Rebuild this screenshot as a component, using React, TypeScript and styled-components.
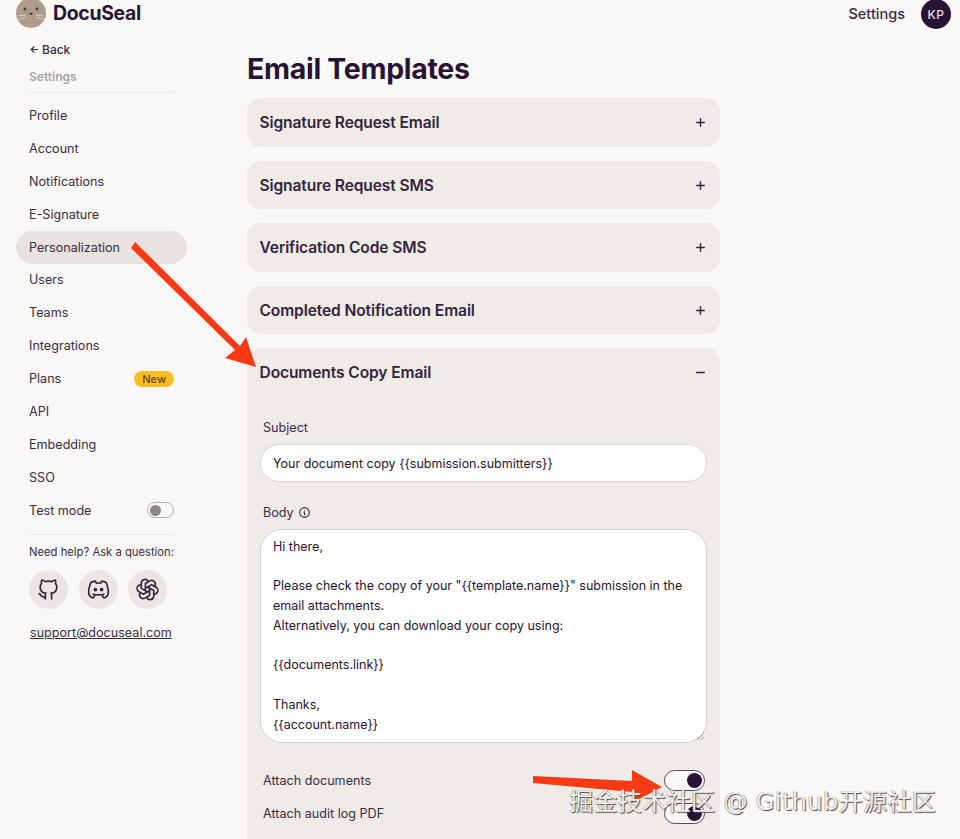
import React from 'react';
import styled, { createGlobalStyle } from 'styled-components';
import { TbArrowLeft, TbBrandDiscord, TbBrandGithub, TbBrandOpenai, TbInfoCircle, TbMinus, TbPlus } from 'react-icons/tb';

const GlobalStyle = createGlobalStyle`
  html, body {
    margin: 0;
    background: #faf8f6;
    color: #291334;
    font-family: Inter, "Liberation Sans", sans-serif;
  }
  * { box-sizing: border-box; }
`;

const Page = styled.div`
  position: relative;
  width: 960px;
  height: 839px;
  overflow: hidden;
`;

const Header = styled.header`
  display: flex;
  align-items: center;
  justify-content: space-between;
  height: 28px;
  padding: 0 9px 0 16px;
`;

const Brand = styled.div`
  display: flex;
  align-items: center;
  gap: 7px;
  font-size: 19.4px;
  font-weight: 700;
  letter-spacing: -0.3px;
`;

const BrandName = styled.span`
  margin-bottom: 2px;
`;

const UserArea = styled.div`
  display: flex;
  align-items: center;
  gap: 16px;
  font-size: 14.5px;
  font-weight: 500;
  color: #3b2c46;
`;

const UserLabel = styled.span`
  margin-bottom: 1px;
`;

const Avatar = styled.div`
  display: flex;
  align-items: center;
  justify-content: center;
  width: 30px;
  height: 30px;
  border-radius: 50%;
  background: #291334;
  color: #e6dfe6;
  font-size: 12px;
  font-weight: 500;
  letter-spacing: 0.5px;
`;

const Layout = styled.div`
  display: grid;
  grid-template-columns: 247px 473px;
`;

const Sidebar = styled.aside`
  padding: 13px 60px 0 16px;
  font-size: 12.6px;
  color: #3b2c46;
`;

const BackLink = styled.div`
  display: flex;
  align-items: center;
  gap: 2px;
  height: 16px;
  padding-left: 13px;
  font-size: 12px;
  font-weight: 500;
`;

const SectionTitle = styled.div`
  margin-top: 12px;
  padding-left: 13px;
  font-size: 12px;
  font-weight: 600;
  color: #a9a5aa;
`;

const Divider = styled.hr<{ $gap: string }>`
  height: 1px;
  margin: ${({ $gap }) => $gap};
  border: 0;
  background: #efebe8;
`;

const NavList = styled.ul`
  margin: 0;
  padding: 0;
  list-style: none;
`;

const NavItem = styled.li<{ $active?: boolean }>`
  display: flex;
  align-items: center;
  justify-content: space-between;
  height: 32.92px;
  padding: 0 13px;
  border-radius: 17px;
  background: ${({ $active }) => ($active ? '#e7e3df' : 'transparent')};
`;

const Badge = styled.span`
  padding: 1px 8px;
  border-radius: 9px;
  background: #fbbd23;
  color: #5e4a1c;
  font-size: 11px;
  font-weight: 500;
  line-height: 14px;
`;

const Toggle = styled.span<{ $on?: boolean; $small?: boolean }>`
  display: flex;
  align-items: center;
  justify-content: ${({ $on }) => ($on ? 'flex-end' : 'flex-start')};
  width: ${({ $small }) => ($small ? '27px' : '41px')};
  height: ${({ $small }) => ($small ? '16px' : '21px')};
  padding: 2px;
  border: 1px solid ${({ $on }) => ($on ? '#55485f' : '#b5b1b3')};
  border-radius: 11px;
  background: #faf8f6;
  &::after {
    content: '';
    width: ${({ $small }) => ($small ? '11px' : '15px')};
    height: ${({ $small }) => ($small ? '11px' : '15px')};
    border-radius: 50%;
    background: ${({ $on }) => ($on ? '#291334' : '#8b878b')};
  }
`;

const HelpText = styled.div`
  padding-left: 13px;
  font-size: 11.25px;
`;

const SocialRow = styled.div`
  display: flex;
  gap: 10.5px;
  margin-top: 11px;
  padding-left: 13px;
`;

const SocialButton = styled.span`
  display: flex;
  align-items: center;
  justify-content: center;
  width: 39px;
  height: 39px;
  border-radius: 50%;
  background: #e9e6e3;
  color: #35263f;
`;

const SupportLink = styled.div`
  margin-top: 16px;
  padding-left: 14px;
  text-decoration: underline;
`;

const Content = styled.main``;

const Title = styled.h1`
  margin: 0;
  padding-top: 21px;
  height: 70px;
  font-size: 28.5px;
  line-height: 40px;
  font-weight: 700;
  letter-spacing: -0.3px;
`;

const Card = styled.section`
  margin-bottom: 14px;
  border-radius: 14px;
  background: #efebe7;
`;

const CardHeader = styled.div`
  display: flex;
  align-items: center;
  justify-content: space-between;
  height: 48.5px;
  padding: 1px 13px 0 12.5px;
  font-size: 15.55px;
  font-weight: 600;
  letter-spacing: -0.1px;
  color: #33233e;
`;

const CardBody = styled.div`
  padding: 22px 13px 40px;
`;

const FieldLabel = styled.div`
  display: flex;
  align-items: center;
  gap: 4px;
  height: 17px;
  margin-bottom: 8px;
  padding-left: 3px;
  font-size: 12.6px;
  color: #3b2c46;
`;

const TextInput = styled.div`
  display: flex;
  align-items: center;
  height: 38px;
  margin-bottom: 22px;
  padding: 1px 12px 0;
  border: 1px solid #dcd8d5;
  border-radius: 19px;
  background: #fff;
  font-size: 12.5px;
`;

const TextArea = styled.div`
  position: relative;
  height: 214px;
  padding: 7px 12px 0;
  border: 1px solid #d5d1ce;
  border-radius: 22px;
  background: #fff;
  font-size: 12.5px;
  line-height: 19.8px;
  white-space: pre-wrap;
`;

const ResizeGrip = styled.svg`
  position: absolute;
  right: 1px;
  bottom: 1px;
`;

const SwitchList = styled.div`
  margin-top: 21.5px;
`;

const SwitchRow = styled.div`
  display: flex;
  align-items: center;
  justify-content: space-between;
  height: 33px;
  padding: 0 2px 0 3px;
  font-size: 12.6px;
  color: #3b2c46;
`;

const ArrowLayer = styled.svg`
  position: absolute;
  left: 0;
  top: 0;
  pointer-events: none;
`;

const Watermark = styled.div`
  position: absolute;
  left: 569px;
  top: 785px;
  font-family: "DejaVu Sans", "Noto Sans CJK SC", sans-serif;
  font-size: 24px;
  line-height: 34px;
  letter-spacing: 0.4px;
  white-space: nowrap;
  color: #f1f0ee;
  text-shadow: 1px 1px 1px #4c4c4c, -0.5px -0.5px 0 #8a8a8a;
`;

const SealLogo = () => (
  <svg width="30" height="30" viewBox="0 0 30 30">
    <circle cx="15" cy="14" r="15" fill="#b09a8a" />
    <circle cx="9" cy="10" r="1.4" fill="#4a3a32" />
    <circle cx="21" cy="10" r="1.4" fill="#4a3a32" />
    <path d="M13 14h4l-2 2.2z" fill="#3a2c26" />
    <path d="M2 17l8-1M1 21l9-3M28 17l-8-1M29 21l-9-3" stroke="#e4d9cf" strokeWidth="0.8" fill="none" />
  </svg>
);

const navItems = ['Profile', 'Account', 'Notifications', 'E-Signature', 'Personalization', 'Users', 'Teams', 'Integrations', 'Plans', 'API', 'Embedding', 'SSO'];
const templates = ['Signature Request Email', 'Signature Request SMS', 'Verification Code SMS', 'Completed Notification Email'];

const bodyText = `Hi there,

Please check the copy of your "{{template.name}}" submission in the
email attachments.
Alternatively, you can download your copy using:

{{documents.link}}

Thanks,
{{account.name}}`;

export default function App() {
  return (
    <Page>
      <GlobalStyle />
      <Header>
        <Brand>
          <SealLogo />
          <BrandName>DocuSeal</BrandName>
        </Brand>
        <UserArea>
          <UserLabel>Settings</UserLabel>
          <Avatar>KP</Avatar>
        </UserArea>
      </Header>
      <Layout>
        <Sidebar>
          <BackLink>
            <TbArrowLeft size={11} strokeWidth={2.4} />
            Back
          </BackLink>
          <SectionTitle>Settings</SectionTitle>
          <Divider $gap="8px 12px 6px 12px" />
          <NavList>
            {navItems.map((item) => (
              <NavItem key={item} $active={item === 'Personalization'}>
                {item}
                {item === 'Plans' && <Badge>New</Badge>}
              </NavItem>
            ))}
            <NavItem>
              Test mode
              <Toggle $small />
            </NavItem>
          </NavList>
          <Divider $gap="7px 12px 10px 12px" />
          <HelpText>Need help? Ask a question:</HelpText>
          <SocialRow>
            <SocialButton><TbBrandGithub size={25} strokeWidth={1.6} /></SocialButton>
            <SocialButton><TbBrandDiscord size={25} strokeWidth={1.6} /></SocialButton>
            <SocialButton><TbBrandOpenai size={25} strokeWidth={1.6} /></SocialButton>
          </SocialRow>
          <SupportLink>support@docuseal.com</SupportLink>
        </Sidebar>
        <Content>
          <Title>Email Templates</Title>
          {templates.map((name) => (
            <Card key={name}>
              <CardHeader>
                {name}
                <TbPlus size={13} strokeWidth={2.6} />
              </CardHeader>
            </Card>
          ))}
          <Card>
            <CardHeader>
              Documents Copy Email
              <TbMinus size={13} strokeWidth={2.6} />
            </CardHeader>
            <CardBody>
              <FieldLabel>Subject</FieldLabel>
              <TextInput>{'Your document copy {{submission.submitters}}'}</TextInput>
              <FieldLabel>
                Body
                <TbInfoCircle size={13} />
              </FieldLabel>
              <TextArea>
                {bodyText}
                <ResizeGrip width="9" height="9" viewBox="0 0 9 9">
                  <path d="M1 8l7-7M5 8l3-3" stroke="#8f8b8a" strokeWidth="0.8" fill="none" />
                </ResizeGrip>
              </TextArea>
              <SwitchList>
                <SwitchRow>
                  Attach documents
                  <Toggle $on />
                </SwitchRow>
                <SwitchRow>
                  Attach audit log PDF
                  <Toggle $on />
                </SwitchRow>
              </SwitchList>
            </CardBody>
          </Card>
        </Content>
      </Layout>
      <ArrowLayer width="960" height="839" viewBox="0 0 960 839">
        <path d="M131 248L135 242L240 346L246 337L256 367L225 358L235 350Z" fill="#f93a14" />
        <path d="M533 776L632 781L632 770L662 787L632 803L632 792L533 783Z" fill="#f93a14" />
      </ArrowLayer>
      <Watermark>掘金技术社区 @ Github开源社区</Watermark>
    </Page>
  );
}
